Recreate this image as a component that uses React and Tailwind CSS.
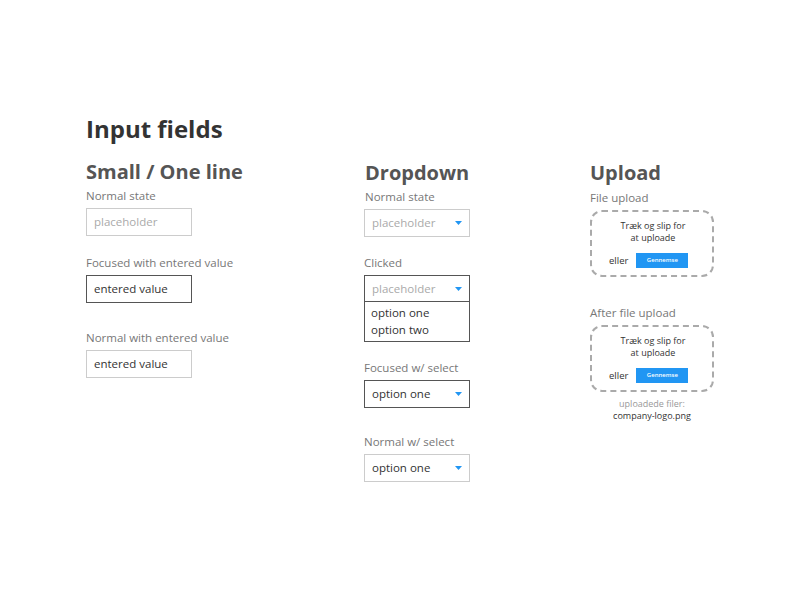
import React from "react";

const font = { fontFamily: '"Open Sans", "Noto Sans", sans-serif' };

function Label({ children, className = "" }) {
  return <div className={"text-[11.5px] leading-[16px] text-[#777] " + className}>{children}</div>;
}

function Arrow() {
  return (
    <svg width="7" height="4" viewBox="0 0 7 4" className="shrink-0">
      <path d="M0 0 H7 L3.5 4 Z" fill="#2196F3" />
    </svg>
  );
}

function TextBox({ value, placeholder, focused }) {
  return (
    <div
      className={
        "w-[106px] h-[28px] flex items-center px-[7px] text-[11.5px] border " +
        (focused ? "border-[#555]" : "border-[#ccc]")
      }
    >
      {value ? <span className="text-[#333]">{value}</span> : <span className="text-[#aaa]">{placeholder}</span>}
    </div>
  );
}

function Select({ value, placeholder, focused }) {
  return (
    <div
      className={
        "w-[106px] h-[28px] flex items-center justify-between pl-[7px] pr-[7px] text-[11.5px] border " +
        (focused ? "border-[#555]" : "border-[#ccc]")
      }
    >
      {value ? <span className="text-[#333]">{value}</span> : <span className="text-[#aaa]">{placeholder}</span>}
      <Arrow />
    </div>
  );
}

function UploadBox() {
  return (
    <div className="w-[124px] h-[67px] border-2 border-dashed border-[#aaa] rounded-[12px] flex flex-col items-center pt-[8px]">
      <div className="text-[9px] leading-[12px] text-[#333] text-center pl-[2px]">
        <div>Træk og slip for</div>
        <div>at uploade</div>
      </div>
      <div className="flex items-center gap-[8px] mt-[9px] self-start pl-[17px]">
        <span className="text-[9.5px] leading-[12px] text-[#333]">eller</span>
        <div className="w-[52px] h-[15px] bg-[#2196F3] flex items-center justify-center text-[6px] font-semibold text-white">
          Gennemse
        </div>
      </div>
    </div>
  );
}

export default function App() {
  return (
    <div style={font} className="w-[800px] h-[600px] bg-white pl-[86px] pt-[114px]">
      <h1 className="text-[24px] leading-[30px] font-bold text-[#333]">Input fields</h1>
      <div className="flex mt-[16px]">
        <div className="w-[278px]">
          <h2 className="text-[20px] leading-[24px] font-bold text-[#555]">Small / One line</h2>
          <Label className="mt-[4px]">Normal state</Label>
          <div className="mt-[4px]">
            <TextBox placeholder="placeholder" />
          </div>
          <Label className="mt-[19px]">Focused with entered value</Label>
          <div className="mt-[4px]">
            <TextBox value="entered value" focused />
          </div>
          <Label className="mt-[27px]">Normal with entered value</Label>
          <div className="mt-[4px]">
            <TextBox value="entered value" />
          </div>
        </div>
        <div className="w-[226px]">
          <h2 className="text-[20px] leading-[24px] font-bold text-[#555] pt-[1px] pl-[1px]">Dropdown</h2>
          <Label className="mt-[4px] pl-[1px]">Normal state</Label>
          <div className="mt-[4px]">
            <Select placeholder="placeholder" />
          </div>
          <Label className="mt-[18px]">Clicked</Label>
          <div className="mt-[4px] w-[106px] border border-[#555]">
            <div className="h-[26px] flex items-center justify-between px-[7px] text-[11.5px] border-b border-[#555]">
              <span className="text-[#aaa]">placeholder</span>
              <Arrow />
            </div>
            <div className="px-[6px] pt-[2px] pb-[3px] text-[11.5px] leading-[17px] text-[#333]">
              <div>option one</div>
              <div>option two</div>
            </div>
          </div>
          <Label className="mt-[18px]">Focused w/ select</Label>
          <div className="mt-[4px]">
            <Select value="option one" focused />
          </div>
          <Label className="mt-[26px]">Normal w/ select</Label>
          <div className="mt-[4px]">
            <Select value="option one" />
          </div>
        </div>
        <div className="w-[140px]">
          <h2 className="text-[20px] leading-[24px] font-bold text-[#555] pt-[1px]">Upload</h2>
          <Label className="mt-[5px]">File upload</Label>
          <div className="mt-[4px]">
            <UploadBox />
          </div>
          <Label className="mt-[28px]">After file upload</Label>
          <div className="mt-[4px]">
            <UploadBox />
          </div>
          <div className="w-[124px] text-center mt-[6px] text-[9px] leading-[12px]">
            <div className="text-[#999]">uploadede filer:</div>
            <div className="text-[#333]">company-logo.png</div>
          </div>
        </div>
      </div>
    </div>
  );
}
